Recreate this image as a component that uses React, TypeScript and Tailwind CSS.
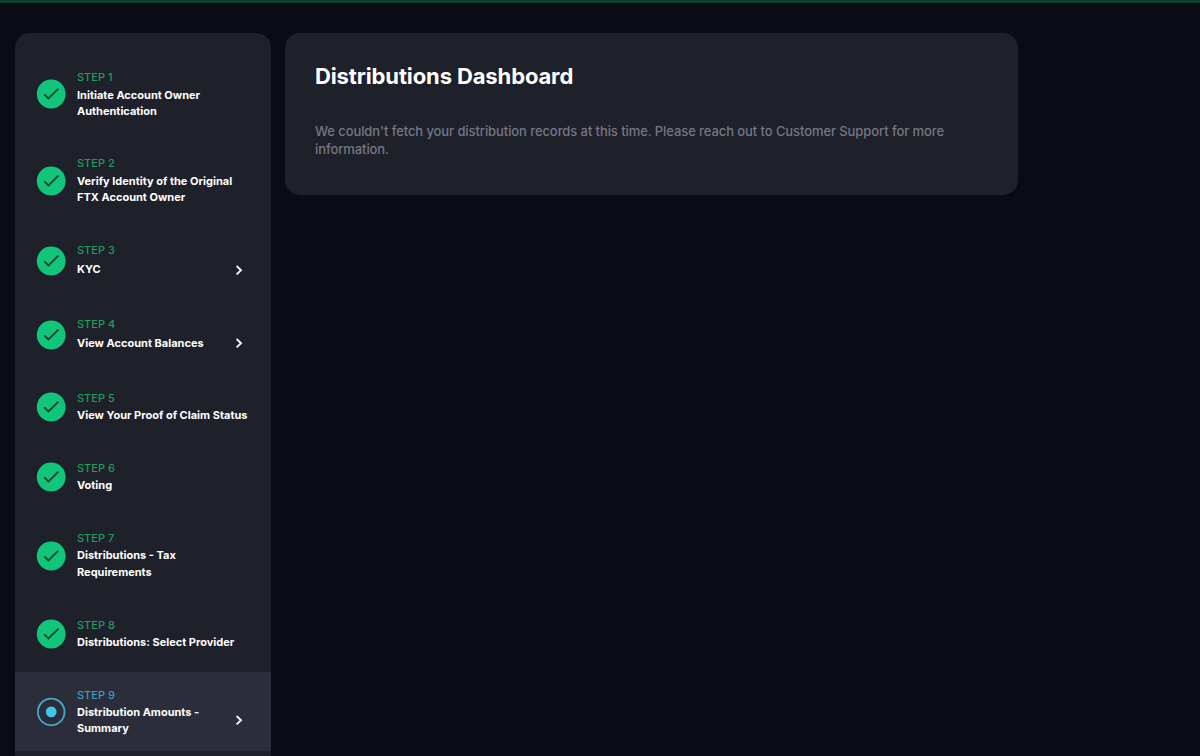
import clsx from "clsx";

type Step = {
  title: string[];
  height: string;
  titleClass?: string;
  chevronClass?: string;
  expandable?: boolean;
  active?: boolean;
};

const steps: Step[] = [
  {
    title: ["Initiate Account Owner", "Authentication"],
    height: "h-[79px]",
    titleClass: "mt-px leading-4",
  },
  {
    title: ["Verify Identity of the Original", "FTX Account Owner"],
    height: "h-20",
    titleClass: "mt-px leading-4",
  },
  {
    title: ["KYC"],
    height: "h-[67px]",
    titleClass: "h-5 leading-4",
    chevronClass: "mt-0.5",
    expandable: true,
  },
  {
    title: ["View Account Balances"],
    height: "h-[67px]",
    titleClass: "h-5 leading-4",
    expandable: true,
  },
  { title: ["View Your Proof of Claim Status"], height: "h-[63px]" },
  { title: ["Voting"], height: "h-[63px]" },
  {
    title: ["Distributions - Tax", "Requirements"],
    height: "h-20",
    titleClass: "leading-[17px]",
  },
  { title: ["Distributions: Select Provider"], height: "h-[63px]" },
  {
    title: ["Distribution Amounts -", "Summary"],
    height: "h-[79px]",
    expandable: true,
    active: true,
  },
];

function StepIcon({ active }: { active?: boolean }) {
  if (active) {
    return (
      <svg viewBox="0 0 29 29" className="size-[29px] shrink-0" fill="none">
        <circle cx="14.2" cy="14.9" r="13.3" stroke="#45a9c2" strokeWidth="1.8" />
        <circle cx="14.2" cy="14.9" r="5.4" fill="#3fc8e6" />
      </svg>
    );
  }
  return (
    <svg viewBox="0 0 29 29" className="size-[29px] shrink-0 overflow-visible" fill="none">
      <circle cx="14.2" cy="15" r="14.4" fill="#11c67b" />
      <path d="M7.3 15.3l4.1 4.1L21.4 9.6" stroke="#14432f" strokeWidth="1.8" />
    </svg>
  );
}

function Chevron({ className }: { className?: string }) {
  return (
    <svg viewBox="0 0 8 12" className={clsx("h-3 w-2 shrink-0", className)} fill="none">
      <path d="M1.6 2L6 6.2l-4.4 4.2" stroke="#f4f4f6" strokeWidth="1.9" />
    </svg>
  );
}

function StepItem({ step, index }: { step: Step; index: number }) {
  return (
    <li
      className={clsx(
        "flex items-center gap-[11px] pl-[22px] pr-7",
        step.height,
        step.active && "bg-[#2b2e3a]",
      )}
    >
      <StepIcon active={step.active} />
      <div className="min-w-0 flex-1">
        <p
          className={clsx(
            "text-[11px] font-medium leading-[17px]",
            step.active ? "text-[#409fbc]" : "text-[#259a5f]",
          )}
        >
          STEP {index + 1}
        </p>
        <div
          className={clsx("flex items-center justify-between", step.titleClass ?? "leading-4")}
        >
          <p className="whitespace-nowrap text-[11px] font-bold leading-[inherit] text-white">
            {step.title.map((line) => (
              <span key={line} className="block">
                {line}
              </span>
            ))}
          </p>
          {step.expandable ? <Chevron className={step.chevronClass} /> : null}
        </div>
      </div>
    </li>
  );
}

export default function App() {
  return (
    <div className="h-screen overflow-hidden border-t-[3px] border-[#0d3f30] bg-[#090c15] font-['Inter',sans-serif]">
      <div className="flex items-start gap-3.5 pl-[15px] pt-[30px]">
        <aside className="h-[760px] w-64 shrink-0 rounded-[15px] bg-[#1e202a] pt-[21px]">
          <ol className="flex flex-col gap-[7px]">
            {steps.map((step, index) => (
              <StepItem key={index} step={step} index={index} />
            ))}
          </ol>
        </aside>
        <main className="h-[162px] w-[733px] rounded-[15px] bg-[#1e202a] px-[30px] pt-7">
          <h1 className="text-[22px] font-bold leading-[30px] tracking-[-0.12px] text-white">
            Distributions Dashboard
          </h1>
          <p className="mt-[31px] w-[650px] text-[13px] font-medium leading-[18px] tracking-[-0.085px] text-[#757784]">
            We couldn't fetch your distribution records at this time. Please reach out to Customer
            Support for more information.
          </p>
        </main>
      </div>
    </div>
  );
}
